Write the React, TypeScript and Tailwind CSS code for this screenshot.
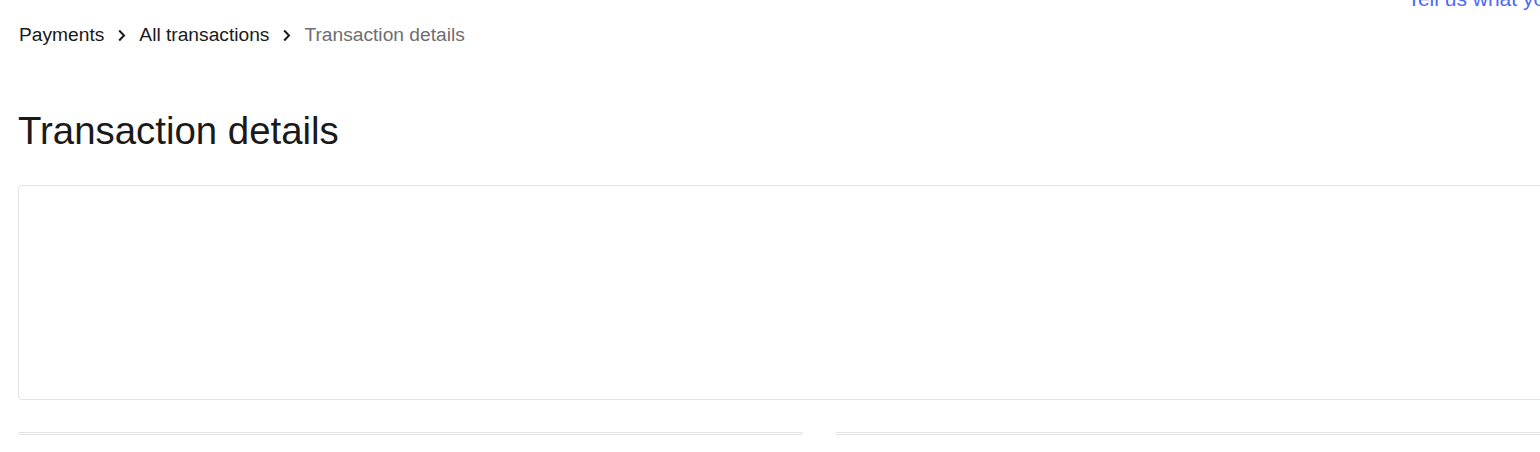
import React from "react";

function Chevron() {
  return (
    <svg width="10" height="13" viewBox="0 0 10 13" className="shrink-0" aria-hidden>
      <path d="M2.2 1.5 L7 6.5 L2.2 11.5" fill="none" stroke="#1a1a1a" strokeWidth="2" />
    </svg>
  );
}

export default function App() {
  return (
    <div className="bg-white min-h-[452px] overflow-hidden" style={{ fontFamily: '"Liberation Sans", Arial, sans-serif' }}>
      <div className="w-[1602px] ml-[18px]">
        <div className="flex justify-end mt-[-12px]">
          <a className="text-[21px] leading-[21px] text-[#4e69f2] mr-[13px] whitespace-nowrap">Tell us what you think</a>
        </div>
        <nav className="mt-[14px] flex items-center h-[24px] text-[19.2px] leading-[24px] pl-[1px]">
          <span className="text-[#1a1a1a]">Payments</span>
          <span className="ml-[13px] mr-[12px] flex items-center"><Chevron /></span>
          <span className="text-[#1a1a1a]">All transactions</span>
          <span className="ml-[13px] mr-[12px] flex items-center"><Chevron /></span>
          <span className="text-[#6e6e6e]">Transaction details</span>
        </nav>
        <h1 className="mt-[62px] text-[38.4px] leading-[44px] text-[#1a1a1a] font-normal">Transaction details</h1>
        <div className="mt-[32px] h-[215px] border border-[#e3e3e3] rounded-[4px]" />
        <div className="mt-[32px] grid grid-cols-2 gap-[32px]">
          <div className="h-[3px] border border-[#e3e3e3] rounded-[2px]" />
          <div className="h-[3px] border border-[#e3e3e3] rounded-[2px]" />
        </div>
      </div>
    </div>
  );
}
